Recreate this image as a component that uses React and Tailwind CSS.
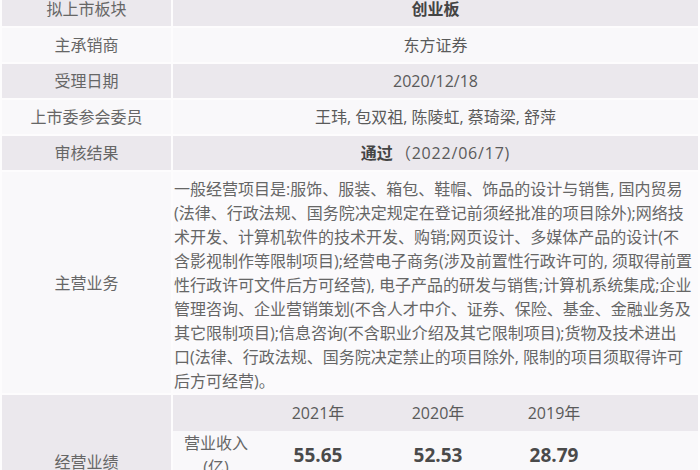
import React from "react";

const font = { fontFamily: '"Open Sans", "Noto Sans CJK SC", sans-serif' };

const rows = [
  { label: "拟上市板块", value: <span className="font-bold text-[#444]">创业板</span>, tone: "gray" },
  { label: "主承销商", value: "东方证券", tone: "light" },
  { label: "受理日期", value: "2020/12/18", tone: "gray" },
  { label: "上市委参会委员", value: "王玮, 包双祖, 陈陵虹, 蔡琦梁, 舒萍", tone: "light" },
  {
    label: "审核结果",
    value: (
      <span>
        <span className="font-bold text-[#444]">通过</span>
        <span className="ml-[2px] tracking-[0.8px]">（2022/06/17)</span>
      </span>
    ),
    tone: "gray",
  },
];

const business = [
  "一般经营项目是:服饰、服装、箱包、鞋帽、饰品的设计与销售, 国内贸易",
  "(法律、行政法规、国务院决定规定在登记前须经批准的项目除外);网络技",
  "术开发、计算机软件的技术开发、购销;网页设计、多媒体产品的设计(不",
  "含影视制作等限制项目);经营电子商务(涉及前置性行政许可的, 须取得前置",
  "性行政许可文件后方可经营), 电子产品的研发与销售;计算机系统集成;企业",
  "管理咨询、企业营销策划(不含人才中介、证券、保险、基金、金融业务及",
  "其它限制项目);信息咨询(不含职业介绍及其它限制项目);货物及技术进出",
  "口(法律、行政法规、国务院决定禁止的项目除外, 限制的项目须取得许可",
  "后方可经营)。",
];

const toneClass = {
  gray: "bg-[#ebe8ed]",
  light: "bg-[#f9f8fa]",
};

export default function App() {
  return (
    <div className="w-[700px] h-[470px] overflow-hidden bg-[#fdfcfd] text-[16px] text-[#5a5a5a]" style={font}>
      <div className="-mt-[10px] p-[2px] grid grid-cols-[169px_1fr] gap-[2px]">
        {rows.map((r) => (
          <React.Fragment key={r.label}>
            <div className={`h-[34px] flex items-center justify-center text-[#666] ${toneClass[r.tone]}`}>{r.label}</div>
            <div className={`h-[34px] flex items-center justify-center ${toneClass[r.tone]}`}>{r.value}</div>
          </React.Fragment>
        ))}

        <div className="flex items-center justify-center text-[#666] bg-[#f9f8fa]">主营业务</div>
        <div className="bg-[#fbfafc] pt-[5px] pl-[1px] leading-[24px] text-[#666]">
          {business.map((line, i) => (
            <div key={i} className="whitespace-nowrap">{line}</div>
          ))}
        </div>

        <div className="flex items-center justify-center text-[#666] bg-[#ebe8ed]">经营业绩</div>
        <div className="bg-[#ebe8ed]">
          <div className="grid grid-cols-[86px_118px_122px_110px_1fr]">
            <div className="h-[36px]" />
            <div className="h-[36px] flex items-center justify-center">2021年</div>
            <div className="h-[36px] flex items-center justify-center">2020年</div>
            <div className="h-[36px] flex items-center justify-center">2019年</div>
            <div />
          </div>
          <div className="grid grid-cols-[86px_118px_122px_110px_1fr] bg-[#f9f8fa]">
            <div className="h-[48px] leading-[24px] text-center text-[#666]">营业收入<br />(亿)</div>
            <div className="flex items-center justify-center font-bold text-[19px] text-[#4a4a4a]">55.65</div>
            <div className="flex items-center justify-center font-bold text-[19px] text-[#4a4a4a]">52.53</div>
            <div className="flex items-center justify-center font-bold text-[19px] text-[#4a4a4a]">28.79</div>
            <div />
          </div>
          <div className="grid grid-cols-[86px_118px_122px_110px_1fr] mt-[2px] bg-[#ebe8ed]">
            <div className="h-[48px] leading-[24px] text-center text-[#666]">净利润<br />(亿)</div>
          </div>
        </div>
      </div>
    </div>
  );
}
